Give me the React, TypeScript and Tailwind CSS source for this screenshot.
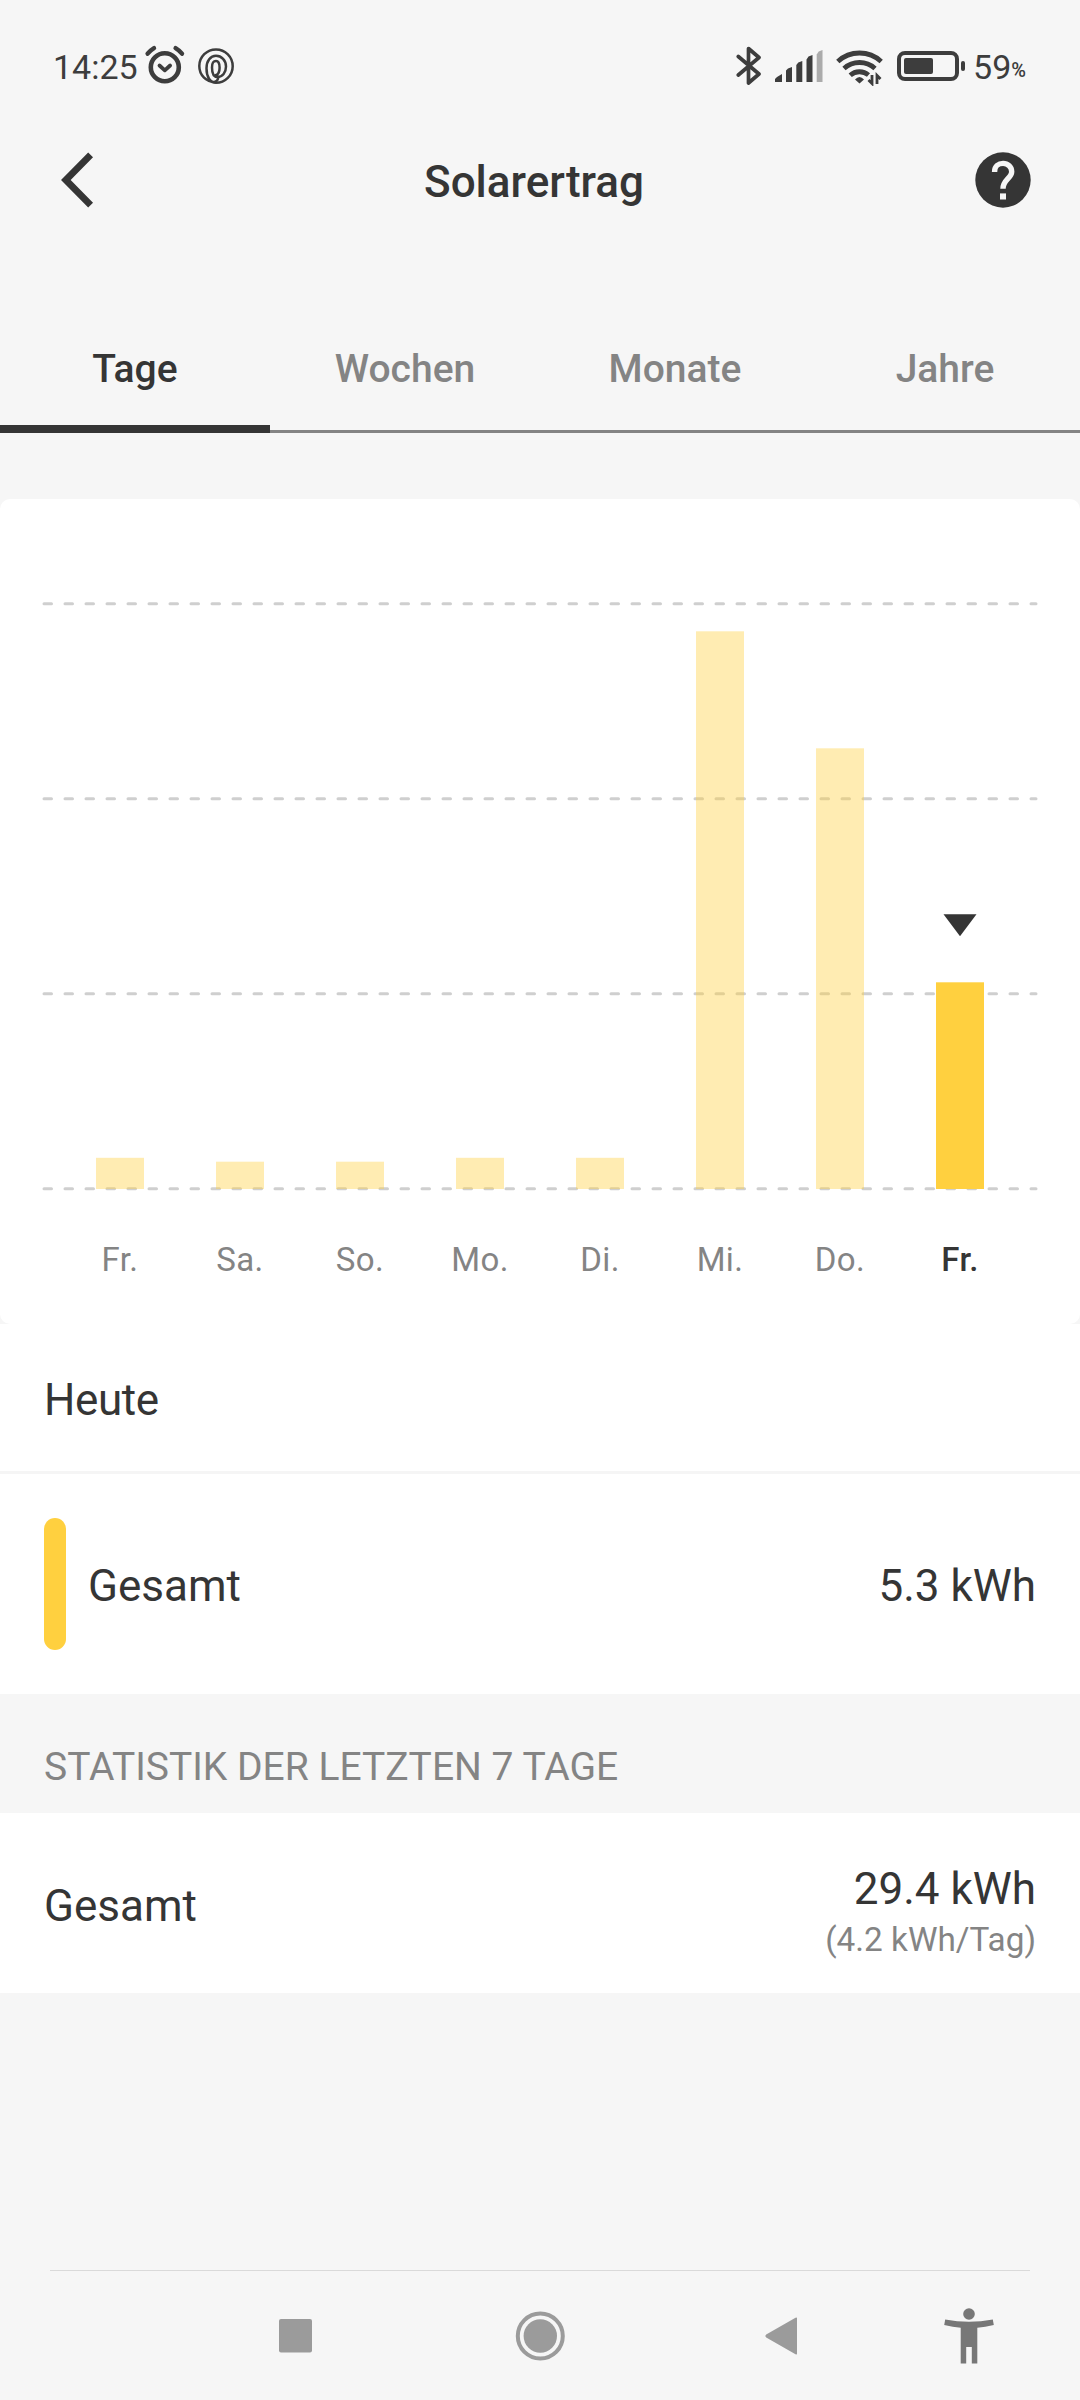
// Solar yield screen: period tabs, a bar per day, today's total and the
// summary of the last seven days. Sizes are physical phone pixels.

import { useState } from 'react'

interface DayYield {
  label: string
  kwh: number
}

const TABS = ['Tage', 'Wochen', 'Monate', 'Jahre']

const DAYS: DayYield[] = [
  { label: 'Fr.', kwh: 0.8 },
  { label: 'Sa.', kwh: 0.7 },
  { label: 'So.', kwh: 0.7 },
  { label: 'Mo.', kwh: 0.8 },
  { label: 'Di.', kwh: 0.8 },
  { label: 'Mi.', kwh: 14.3 },
  { label: 'Do.', kwh: 11.3 },
  { label: 'Fr.', kwh: 5.3 },
]

const PX_PER_KWH = 39
const BASELINE = 690
const GRID_KWH = [0, 5, 10, 15]

function StatusBar() {
  return (
    <div className="flex h-[134px] items-start pt-[40px] pr-[54px] pl-[53px] text-[34px] leading-[54px] text-[#3d3d3d]">
      <span>14:25</span>
      <svg className="mt-[5px] ml-[6px] h-[40px] w-[42px]" viewBox="0 0 42 40" fill="none" stroke="currentColor" strokeLinecap="round">
        <circle cx="20.8" cy="22.3" r="14" strokeWidth="4.6" />
        <path d="M15.5 20.5l5.3 4.8 5.3-4.8" strokeWidth="3.8" strokeLinejoin="round" />
        <path d="M3.6 8.7q3-3.6 6.4-5.6M38 8.7q-3-3.6-6.4-5.6" strokeWidth="4.4" />
      </svg>
      <svg className="mt-[7px] ml-[11px] h-[38px] w-[38px]" viewBox="0 0 38 38" fill="none" stroke="currentColor" strokeWidth="2.5" strokeLinecap="round">
        <path d="M18 35C9 35 2.3 28 2.3 19A16.7 16.7 0 1 1 19 35.8c-6 0-9.5-6-9.5-14.5C9.5 14 13.5 8.8 19 8.8S29 13.5 29 19.5 25.5 30 20.5 30c-4 0-5.5-4-5.5-9.5S16.500 14 19 14s3.6 2.8 3.6 6.8S21 28 19 28" />
        <path d="M18 35c3.5-1.5 4-5 1.5-6.5" />
      </svg>
      <div className="flex-1" />
      <svg className="mt-[6px] h-[40px] w-[26px]" viewBox="0 0 26 40" fill="none" stroke="currentColor" strokeWidth="3.7" strokeLinejoin="round" strokeLinecap="round">
        <path d="M2.3 10.5L23 28 12.5 37V2.5L23 11.5 2.3 29" />
      </svg>
      <svg className="mt-[10px] ml-[13px] h-[33px] w-[48px]" viewBox="0 0 48 33" fill="currentColor">
        <path d="M0 32v-3l2-2 5-3v8zM11 32V20.5l2-2 4-1.5V32zM21.3 32V15l2-2.5 4-1.5V32zM31.5 32V9.5l2-3 4-1.5V32z" />
        <path d="M41.7 32V4.5l2-3L47.5 0v32z" opacity=".4" />
      </svg>
      <svg className="mt-[8px] ml-[13px] h-[38px] w-[48px]" viewBox="0 0 48 38" fill="none" stroke="currentColor" strokeWidth="4.8">
        <path d="M1.8 13.5A32 32 0 0 1 45.2 13.5M8 20.5A23 23 0 0 1 39 20.5M14.2 27.3A14 14 0 0 1 32.5 27" />
        <path d="M19 31.5Q23.5 26.5 28 31.5L23.5 35.5z" fill="currentColor" stroke="none" />
        <path d="M36 27v8.5l-3.5-3.5M41 36v-8.5l3.5 3.5" strokeWidth="2.8" />
      </svg>
      <svg className="mt-[10px] ml-[13px] h-[32px] w-[70px]" viewBox="0 0 70 32" fill="currentColor">
        <rect x="2" y="3" width="58" height="26" rx="6" fill="none" stroke="currentColor" strokeWidth="4" />
        <rect x="7" y="8" width="29" height="16" rx="2" />
        <rect x="64" y="11" width="4" height="10" rx="2" />
      </svg>
      <span className="ml-[6px]">59</span>
      <span className="pt-[3px] text-[20px] font-medium">%</span>
    </div>
  )
}

function Header() {
  return (
    <header className="flex h-[92px] items-center justify-between pr-[49px] pl-[58px]">
      <button type="button" aria-label="Zurück">
        <svg className="h-[60px] w-[60px]" viewBox="0 0 60 60" fill="none" stroke="currentColor" strokeWidth="6.8">
          <path d="M32.6 4.9L7.8 30l24.8 25.1" />
        </svg>
      </button>
      <h1 className="pt-[4px] pr-[25px] text-[44px] font-medium">Solarertrag</h1>
      <button type="button" aria-label="Hilfe">
        <svg className="h-[56px] w-[56px]" viewBox="0 0 56 56" fill="none">
          <circle cx="28" cy="28" r="27.7" fill="currentColor" />
          <path d="M19.6 20v-.5c0-5 3.8-8.1 8.5-8.1s8.6 3.6 8.6 8.3c0 6.5-8.7 8-8.7 17" stroke="#f6f6f6" strokeWidth="5.4" />
          <path d="M25 41.4h6v6.1h-6z" fill="#f6f6f6" />
        </svg>
      </button>
    </header>
  )
}

function YieldChart({ selected, onSelect }: { selected: number; onSelect: (i: number) => void }) {
  return (
    <section className="h-[825px] rounded-[10px] bg-white">
      <svg className="block h-[720px] w-full" viewBox="0 0 1080 720">
        {GRID_KWH.map((kwh) => (
          <line
            key={kwh}
            x1="44"
            x2="1036"
            y1={BASELINE - kwh * PX_PER_KWH - 0.3}
            y2={BASELINE - kwh * PX_PER_KWH - 0.3}
            stroke="#cfcfcf"
            strokeWidth="3"
            strokeLinecap="round"
            strokeDasharray="7.5 13.5"
          />
        ))}
        {DAYS.map((day, i) => {
          const h = day.kwh * PX_PER_KWH
          return (
            <rect
              key={i}
              x={96 + i * 120}
              y={BASELINE - h}
              width="48"
              height={h}
              fill="#ffd03f"
              fillOpacity={i === selected ? 1 : 0.4}
              onClick={() => onSelect(i)}
            />
          )
        })}
        <path
          d="M-16.5 0h33L0 22z"
          fill="#353535"
          transform={`translate(${120 + selected * 120} ${BASELINE - DAYS[selected].kwh * PX_PER_KWH - 68})`}
        />
      </svg>
      <div className="grid grid-cols-8 px-[60px] pt-[16px] text-center text-[33px] leading-[50px] tracking-[0.4px]">
        {DAYS.map((day, i) => (
          <span key={i} className={i === selected ? 'font-medium' : 'text-[#848484]'}>
            {day.label}
          </span>
        ))}
      </div>
    </section>
  )
}

function NavBar() {
  return (
    <nav className="mx-[50px] mt-auto h-[130px] border-t border-[#dadada] text-[#9b9b9b]">
      <div className="flex h-full items-center">
        <svg className="ml-[229px] h-[34px] w-[33px]" viewBox="0 0 33 34" fill="currentColor">
          <rect width="33" height="33.5" rx="2" />
        </svg>
        <svg className="ml-[203px] h-[50px] w-[50px]" viewBox="0 0 50 50" fill="currentColor">
          <circle cx="25.3" cy="25" r="22.5" fill="none" stroke="currentColor" strokeWidth="4" />
          <circle cx="25.3" cy="25" r="16.7" />
        </svg>
        <svg className="ml-[200px] h-[38px] w-[33px]" viewBox="0 0 33 38" fill="currentColor">
          <path d="M30.5.8Q32-.3 32 1.5V36.5Q32 38.3 30.5 37.2L1.2 20.5Q-.4 19 1.2 17.5z" />
        </svg>
        <svg className="ml-[146px] h-[58px] w-[50px] text-[#777]" viewBox="0 0 50 58" fill="currentColor">
          <circle cx="25" cy="7" r="5.8" />
          <path d="M1.2 12.5Q25 17 48.8 12.5L49.8 18Q41 20 33.3 20.8V56.5h-5.5V40h-5.6v16.5h-5.5V20.8Q9 20 .2 18z" />
        </svg>
      </div>
    </nav>
  )
}

export default function App() {
  const [tab, setTab] = useState(0)
  const [selected, setSelected] = useState(DAYS.length - 1)

  return (
    <div className="flex h-[2400px] w-[1080px] flex-col bg-[#f6f6f6] font-[Roboto,sans-serif] text-[#353535]">
      <StatusBar />
      <Header />
      <div className="mt-[74px] grid h-[133px] grid-cols-4 text-[39px] font-medium">
        {TABS.map((name, i) => (
          <button
            key={name}
            type="button"
            onClick={() => setTab(i)}
            className={`flex items-end justify-center ${
              i === tab ? 'border-b-8 border-[#353535] pb-[27px]' : 'border-b-3 border-[#848484] pb-[32px] text-[#848484]'
            }`}
          >
            {name}
          </button>
        ))}
      </div>

      <main className="mt-[66px]">
        <YieldChart selected={selected} onSelect={setSelected} />
        <h2 className="flex h-[150px] items-center border-b-3 border-[#f5f5f5] bg-white px-[44px] pt-[5px] text-[44px] tracking-[-0.4px]">
          Heute
        </h2>
        <div className="flex h-[220px] items-center bg-white px-[44px] text-[44px]">
          <span className="h-[132px] w-[22px] rounded-full bg-[#ffd03f]" />
          <span className="ml-[22px] pt-[4px]">Gesamt</span>
          <span className="ml-auto pt-[4px]">5.3 kWh</span>
        </div>
        <h2 className="flex h-[119px] items-center px-[44px] pt-[28px] text-[39px] text-[#848484] uppercase">
          Statistik der letzten 7 Tage
        </h2>
        <div className="flex h-[180px] items-center justify-between bg-white px-[44px] text-[44px]">
          <span className="pt-[5px]">Gesamt</span>
          <div className="pt-[22px] text-right">
            <p className="leading-[52px]">29.4 kWh</p>
            <p className="text-[33.3px] leading-[50px] text-[#848484]">(4.2 kWh/Tag)</p>
          </div>
        </div>
      </main>
      <NavBar />
    </div>
  )
}
